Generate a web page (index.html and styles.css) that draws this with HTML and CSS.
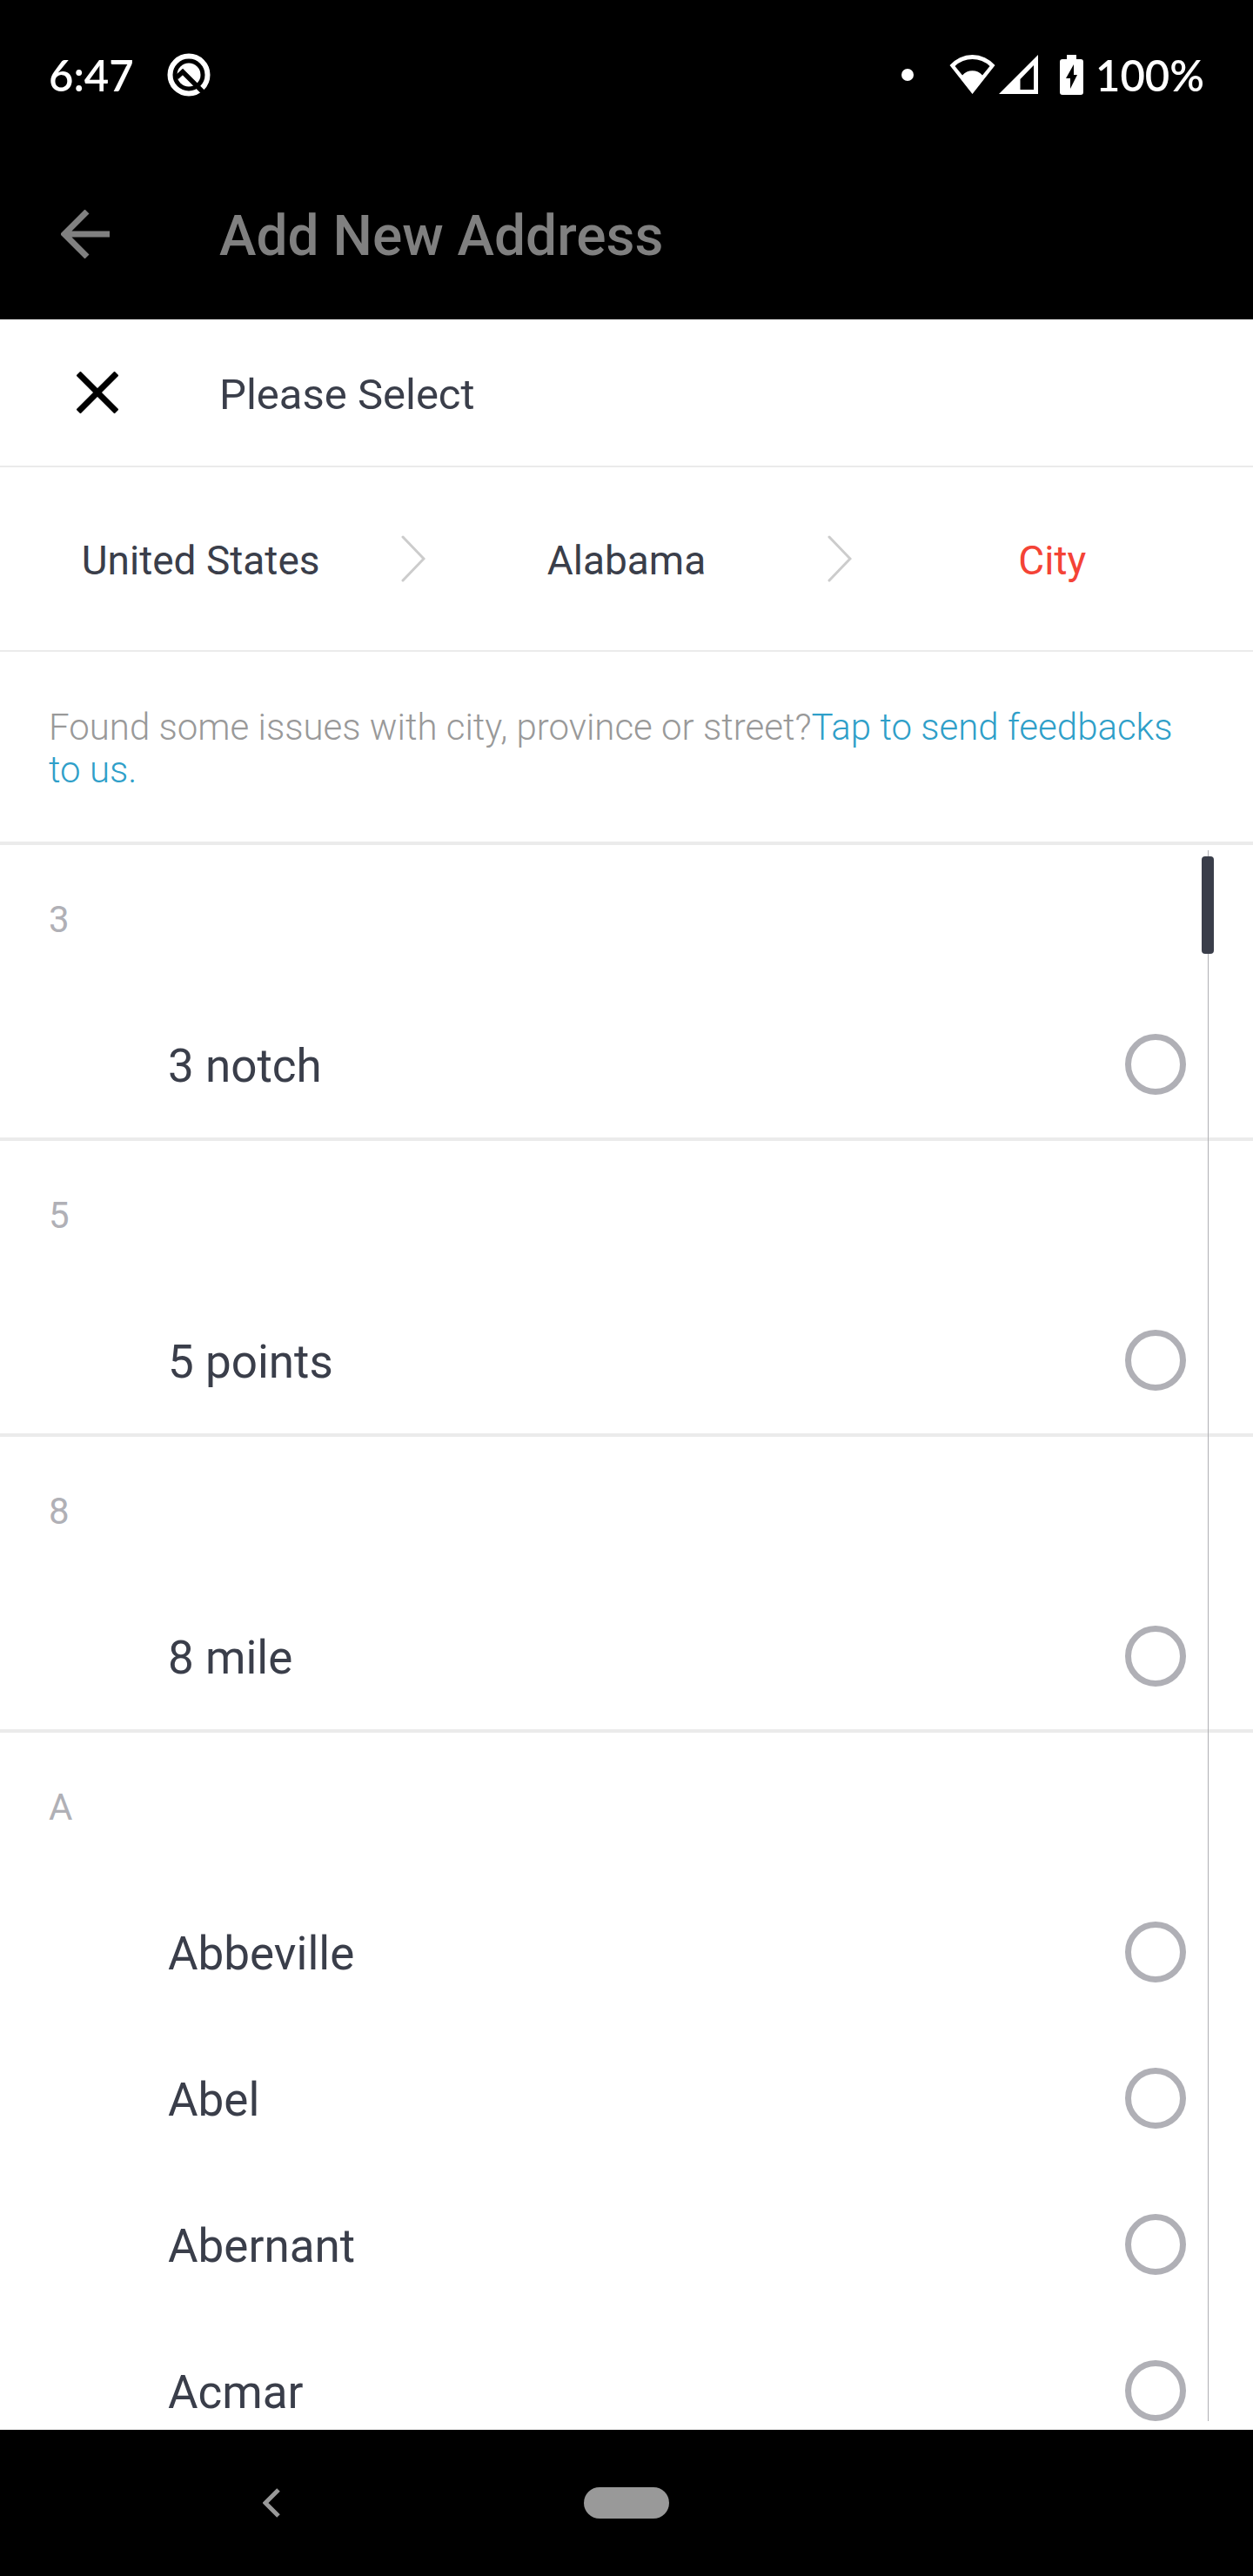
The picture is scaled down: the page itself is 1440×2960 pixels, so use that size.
FILE: index.html
```html
<!DOCTYPE html>
<html lang="en">
<head>
<meta charset="utf-8">
<meta name="viewport" content="width=device-width, initial-scale=1">
<title>Add New Address</title>
<link rel="stylesheet" href="styles.css">
</head>
<body>
<div class="app">
  <div class="status-bar">
    <div class="status-group status-left">
      <span>6:47</span>
      <svg class="icon-q" viewBox="0 0 50 50" aria-hidden="true">
        <circle cx="25" cy="25" r="21.5" fill="none" stroke="#fff" stroke-width="6"/>
        <circle cx="25" cy="25" r="13.500" fill="#fff"/>
        <path d="M11 28 L18 21.500 L42 45.500" fill="none" stroke="#000" stroke-width="5.500"/>
      </svg>
    </div>
    <div class="status-group status-right">
      <svg class="icon-dot" viewBox="0 0 14 14" aria-hidden="true"><circle cx="7" cy="7" r="7" fill="#fff"/></svg>
      <svg class="icon-wifi" viewBox="0 0 53 46" aria-hidden="true">
        <path fill-rule="evenodd" fill="#fff" d="M0.500 12 A34.200 34.200 0 0 1 52.500 12 L26.500 45 Z M6.500 13 L15 23.500 A15 15 0 0 1 38 23.500 L46.500 13 A29 29 0 0 0 6.500 13 Z"/>
      </svg>
      <svg class="icon-signal" viewBox="0 0 45 46" aria-hidden="true">
        <path fill-rule="evenodd" fill="#fff" d="M45 0 V45 H0 Z M40 12 L24.500 28 V40 H40 Z"/>
      </svg>
      <svg class="icon-battery" viewBox="0 0 27 46" aria-hidden="true">
        <path fill="#fff" d="M8 0 H19 V5 H24 Q27 5 27 8 V43 Q27 46 24 46 H3 Q0 46 0 43 V8 Q0 5 3 5 H8 Z"/>
        <path fill="#000" d="M16 11 L7 27 H12 V39 L20 23 H16 Z"/>
      </svg>
      <span>100%</span>
    </div>
  </div>

  <header class="app-bar">
    <button class="icon-button back" type="button" aria-label="Back">
      <svg viewBox="0 0 56 56" width="56" height="56" aria-hidden="true"><path d="M30 2 L4 28 L30 54 M4 28 H56" fill="none" stroke="#808080" stroke-width="7"/></svg>
    </button>
    <h1 class="app-title">Add New Address</h1>
  </header>

  <main class="sheet">
    <div class="sheet-header">
      <button class="icon-button close" type="button" aria-label="Close">
        <svg viewBox="0 0 48 48" width="48" height="48" aria-hidden="true"><path d="M2 2 L46 46 M46 2 L2 46" fill="none" stroke="#000" stroke-width="7"/></svg>
      </button>
      <h2 class="sheet-title">Please Select</h2>
    </div>

    <nav class="levels" aria-label="Location">
      <button class="level" type="button">United States</button>
      <svg class="level-arrow" viewBox="0 0 28 54" aria-hidden="true"><path d="M2 2 L26 27 L2 52" fill="none" stroke="#ccc" stroke-width="3" stroke-linecap="round"/></svg>
      <button class="level" type="button">Alabama</button>
      <svg class="level-arrow" viewBox="0 0 28 54" aria-hidden="true"><path d="M2 2 L26 27 L2 52" fill="none" stroke="#ccc" stroke-width="3" stroke-linecap="round"/></svg>
      <button class="level level-active" type="button">City</button>
    </nav>

    <p class="hint">Found some issues with city, province or street?<a href="#feedback">Tap to send feedbacks to us.</a></p>

    <div class="list-frame">
      <div class="list">
        <section class="group">
          <h3 class="group-title">3</h3>
          <label class="option"><span class="option-name">3 notch</span><input class="radio" type="radio" name="city"></label>
        </section>
        <section class="group">
          <h3 class="group-title">5</h3>
          <label class="option"><span class="option-name">5 points</span><input class="radio" type="radio" name="city"></label>
        </section>
        <section class="group">
          <h3 class="group-title">8</h3>
          <label class="option"><span class="option-name">8 mile</span><input class="radio" type="radio" name="city"></label>
        </section>
        <section class="group">
          <h3 class="group-title">A</h3>
          <label class="option"><span class="option-name">Abbeville</span><input class="radio" type="radio" name="city"></label>
          <label class="option"><span class="option-name">Abel</span><input class="radio" type="radio" name="city"></label>
          <label class="option"><span class="option-name">Abernant</span><input class="radio" type="radio" name="city"></label>
          <label class="option"><span class="option-name">Acmar</span><input class="radio" type="radio" name="city"></label>
        </section>
      </div>
      <div class="scroll-track"><div class="scroll-thumb"></div></div>
    </div>
  </main>

  <div class="nav-bar">
    <button class="icon-button nav-back" type="button" aria-label="Back">
      <svg viewBox="0 0 20 34" width="20" height="34" aria-hidden="true"><path d="M18 2 L3 17 L18 32" fill="none" stroke="#999" stroke-width="5"/></svg>
    </button>
    <button class="nav-home" type="button" aria-label="Home"></button>
  </div>
</div>
</body>
</html>
```
FILE: styles.css
```css
* {
  box-sizing: border-box;
}

body {
  margin: 0;
  font-family: Roboto, "Liberation Sans", sans-serif;
  color: #3a3e4a;
  background: #000;
}

h1, h2, h3, p {
  margin: 0;
  font-weight: 400;
}

button {
  margin: 0;
  padding: 0;
  border: 0;
  background: none;
  font: inherit;
  color: inherit;
}

svg {
  display: block;
  flex: none;
}

.app {
  display: flex;
  flex-direction: column;
  height: 100vh;
}

/* System status bar */
.status-bar {
  flex: none;
  display: flex;
  justify-content: space-between;
  align-items: center;
  height: 171px;
  padding: 0 56px;
  color: #fff;
  font-family: Lato, Roboto, sans-serif;
  font-size: 49px;
  font-weight: 600;
}

.status-group {
  display: flex;
  align-items: center;
}

.status-left {
  gap: 38px;
}

.icon-q {
  width: 50px;
  height: 50px;
}

.icon-dot {
  width: 14px;
  height: 14px;
  margin-right: 41px;
}

.icon-wifi {
  width: 53px;
  height: 46px;
  margin-right: 4px;
}

.icon-signal {
  width: 45px;
  height: 46px;
  margin-right: 25px;
}

.icon-battery {
  width: 27px;
  height: 46px;
  margin-right: 14px;
}

/* Dimmed page header */
.app-bar {
  flex: none;
  display: flex;
  align-items: center;
  height: 196px;
  color: #808080;
}

.icon-button {
  flex: none;
  display: flex;
  align-items: center;
}

.back {
  width: 252px;
  padding-left: 70px;
}

.app-title {
  padding-top: 4px;
  font-size: 64px;
  font-weight: 500;
}

/* Selection sheet */
.sheet {
  flex: 1;
  min-height: 0;
  display: flex;
  flex-direction: column;
  background: #fff;
}

.sheet-header {
  flex: none;
  display: flex;
  align-items: center;
  height: 170px;
  border-bottom: 2px solid #ebebeb;
}

.close {
  width: 252px;
  padding-left: 88px;
}

.sheet-title {
  padding-top: 4px;
  font-size: 49px;
}

.levels {
  flex: none;
  display: flex;
  align-items: center;
  height: 212px;
  border-bottom: 2px solid #ebebeb;
  font-size: 46px;
}

.level {
  flex: 1;
  padding-top: 4px;
  text-align: center;
}

.level-active {
  color: #f44336;
}

.level-arrow {
  width: 28px;
  height: 54px;
}

.hint {
  flex: none;
  padding: 62px 56px 58px;
  border-bottom: 4px solid #ebebeb;
  font-size: 42px;
  font-weight: 300;
  line-height: 49px;
  color: #999;
}

.hint a {
  color: #2f9fc9;
  text-decoration: none;
}

.list-frame {
  position: relative;
  flex: 1;
  min-height: 0;
}

.list {
  height: 100%;
  overflow-y: auto;
  scrollbar-width: none;
}

.group {
  border-bottom: 4px solid #ebebeb;
}

.group-title {
  display: flex;
  align-items: center;
  height: 168px;
  padding: 2px 56px 0;
  font-size: 42px;
  color: #b0b0b6;
}

.option {
  display: flex;
  justify-content: space-between;
  align-items: center;
  height: 168px;
  padding: 0 77px 0 193px;
  font-size: 53px;
}

.option-name {
  padding-top: 4px;
}

.radio {
  appearance: none;
  flex: none;
  width: 70px;
  height: 70px;
  margin: 0;
  border: 7px solid #b0b0b6;
  border-radius: 50%;
}

.radio:checked {
  border-color: #f44336;
}

/* Fast-scroll indicator laid over the list */
.scroll-track {
  position: absolute;
  top: 6px;
  right: 51px;
  bottom: 10px;
  width: 1px;
  background: #b0b0b4;
}

.scroll-thumb {
  position: absolute;
  top: 7px;
  left: -7px;
  width: 14px;
  height: 112px;
  border-radius: 4px;
  background: #3a3e4a;
}

/* System navigation bar */
.nav-bar {
  flex: none;
  display: grid;
  grid-template-columns: 1fr 98px 1fr;
  align-items: center;
  height: 168px;
}

.nav-back {
  justify-self: center;
  margin-right: 48px;
}

.nav-home {
  height: 36px;
  border-radius: 18px;
  background: #999;
}
```
